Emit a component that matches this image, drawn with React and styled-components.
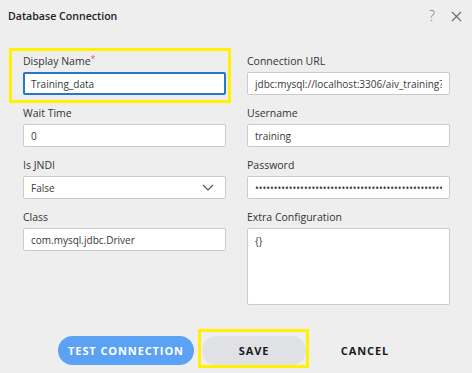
import React from "react";
import styled, { createGlobalStyle } from "styled-components";

const GlobalStyle = createGlobalStyle`
    html, body {
        margin: 0;
        padding: 0;
        background: #eeeeee;
    }
    * {
        box-sizing: border-box;
    }
`

const Dialog = styled.div`
    width: 472px;
    height: 373px;
    background: #eeeeee;
    font-family: "Open Sans", "Noto Sans", sans-serif;
    color: #333333;
    display: flex;
    flex-direction: column;
`

const Header = styled.div`
    height: 32px;
    display: flex;
    align-items: center;
    justify-content: space-between;
    padding: 0 10px 0 8px;
`

const Title = styled.h2`
    margin: 0;
    font-size: 10.6px;
    font-weight: 600;
    color: #222222;
`

const HeaderIcons = styled.div`
    display: flex;
    align-items: center;
    gap: 16px;
    color: #777777;
`

const Help = styled.span`
    font-size: 14px;
    font-weight: 300;
    line-height: 1;
`

const Form = styled.div`
    display: grid;
    grid-template-columns: 203px 203px;
    column-gap: 21px;
    padding: 22px 22px 0 23px;
`

const Column = styled.div`
    display: flex;
    flex-direction: column;
    gap: 11px;
`

const Field = styled.div`
    position: relative;
    display: flex;
    flex-direction: column;
`

const Highlight = styled.div`
    position: absolute;
    left: -14px;
    right: -5px;
    top: -6px;
    bottom: -8px;
    border: 3px solid #fff200;
    pointer-events: none;
`

const Label = styled.label`
    font-size: 10.5px;
    line-height: 14px;
    margin-bottom: 4px;
    color: #333333;
`

const Required = styled.span`
    color: #e05a5a;
    font-size: 9px;
    vertical-align: top;
    line-height: 10px;
`

const Input = styled.input`
    height: 23px;
    width: 100%;
    border: ${p => (p.$focused ? "2px solid #2677c9" : "1px solid #cbcbcb")};
    border-radius: 2px;
    background: #ffffff;
    padding: 0 ${p => (p.$focused ? "6px" : "7px")};
    font-family: inherit;
    font-size: 10px;
    color: #383838;
    outline: none;
`

const SelectBox = styled.div`
    height: 23px;
    border: 1px solid #cbcbcb;
    border-radius: 2px;
    background: #ffffff;
    padding: 0 11px 0 7px;
    display: flex;
    align-items: center;
    justify-content: space-between;
    font-size: 10px;
    color: #383838;
`

const TextArea = styled.textarea`
    height: 77px;
    width: 100%;
    border: 1px solid #cbcbcb;
    border-radius: 2px;
    background: #ffffff;
    padding: 5px 7px;
    font-family: inherit;
    font-size: 10px;
    color: #383838;
    resize: none;
    outline: none;
`

const Footer = styled.div`
    display: flex;
    gap: 8px;
    padding: 31px 0 0 58px;
`

const Button = styled.button`
    position: relative;
    height: 29px;
    width: ${p => p.$width}px;
    border: none;
    border-radius: 15px;
    background: ${p => p.$bg};
    color: ${p => p.$color};
    font-family: "Open Sans", "Noto Sans", sans-serif;
    font-size: 11px;
    font-weight: 700;
    letter-spacing: 0.9px;
    cursor: pointer;
`

const ButtonHighlight = styled.span`
    position: absolute;
    left: -4px;
    right: -3px;
    top: -7px;
    bottom: -3px;
    border: 3px solid #fff200;
`

const Chevron = () => (
    <svg width="12" height="7" viewBox="0 0 12 7">
        <path d="M1 1 L6 6 L11 1" fill="none" stroke="#555" strokeWidth="1.2" />
    </svg>
)

const Close = () => (
    <svg width="11" height="11" viewBox="0 0 11 11">
        <path d="M1 1 L10 10 M10 1 L1 10" fill="none" stroke="#6b6b6b" strokeWidth="1.1" />
    </svg>
)

const App = () => {
    return (
        <Dialog>
            <GlobalStyle />
            <Header>
                <Title>Database Connection</Title>
                <HeaderIcons>
                    <Help>?</Help>
                    <Close />
                </HeaderIcons>
            </Header>
            <Form>
                <Column>
                    <Field>
                        <Highlight />
                        <Label>Display Name<Required>*</Required></Label>
                        <Input $focused defaultValue="Training_data" />
                    </Field>
                    <Field>
                        <Label>Wait Time</Label>
                        <Input defaultValue="0" />
                    </Field>
                    <Field>
                        <Label>Is JNDI</Label>
                        <SelectBox>
                            <span>False</span>
                            <Chevron />
                        </SelectBox>
                    </Field>
                    <Field>
                        <Label>Class</Label>
                        <Input defaultValue="com.mysql.jdbc.Driver" />
                    </Field>
                </Column>
                <Column>
                    <Field>
                        <Label>Connection URL</Label>
                        <Input defaultValue="jdbc:mysql://localhost:3306/aiv_training?autoReconnect=true" />
                    </Field>
                    <Field>
                        <Label>Username</Label>
                        <Input defaultValue="training" />
                    </Field>
                    <Field>
                        <Label>Password</Label>
                        <Input type="password" defaultValue="trainingpassword1234567890abcdefghijklmnopqrstuvwxyz" />
                    </Field>
                    <Field>
                        <Label>Extra Configuration</Label>
                        <TextArea defaultValue="{}" />
                    </Field>
                </Column>
            </Form>
            <Footer>
                <Button $width={136} $bg="#5ba2f4" $color="#ffffff">TEST CONNECTION</Button>
                <Button $width={104} $bg="#dfe1e5" $color="#1a1a1a">
                    <ButtonHighlight />
                    SAVE
                </Button>
                <Button $width={102} $bg="transparent" $color="#1a1a1a">CANCEL</Button>
            </Footer>
        </Dialog>
    );
};

export default App;
